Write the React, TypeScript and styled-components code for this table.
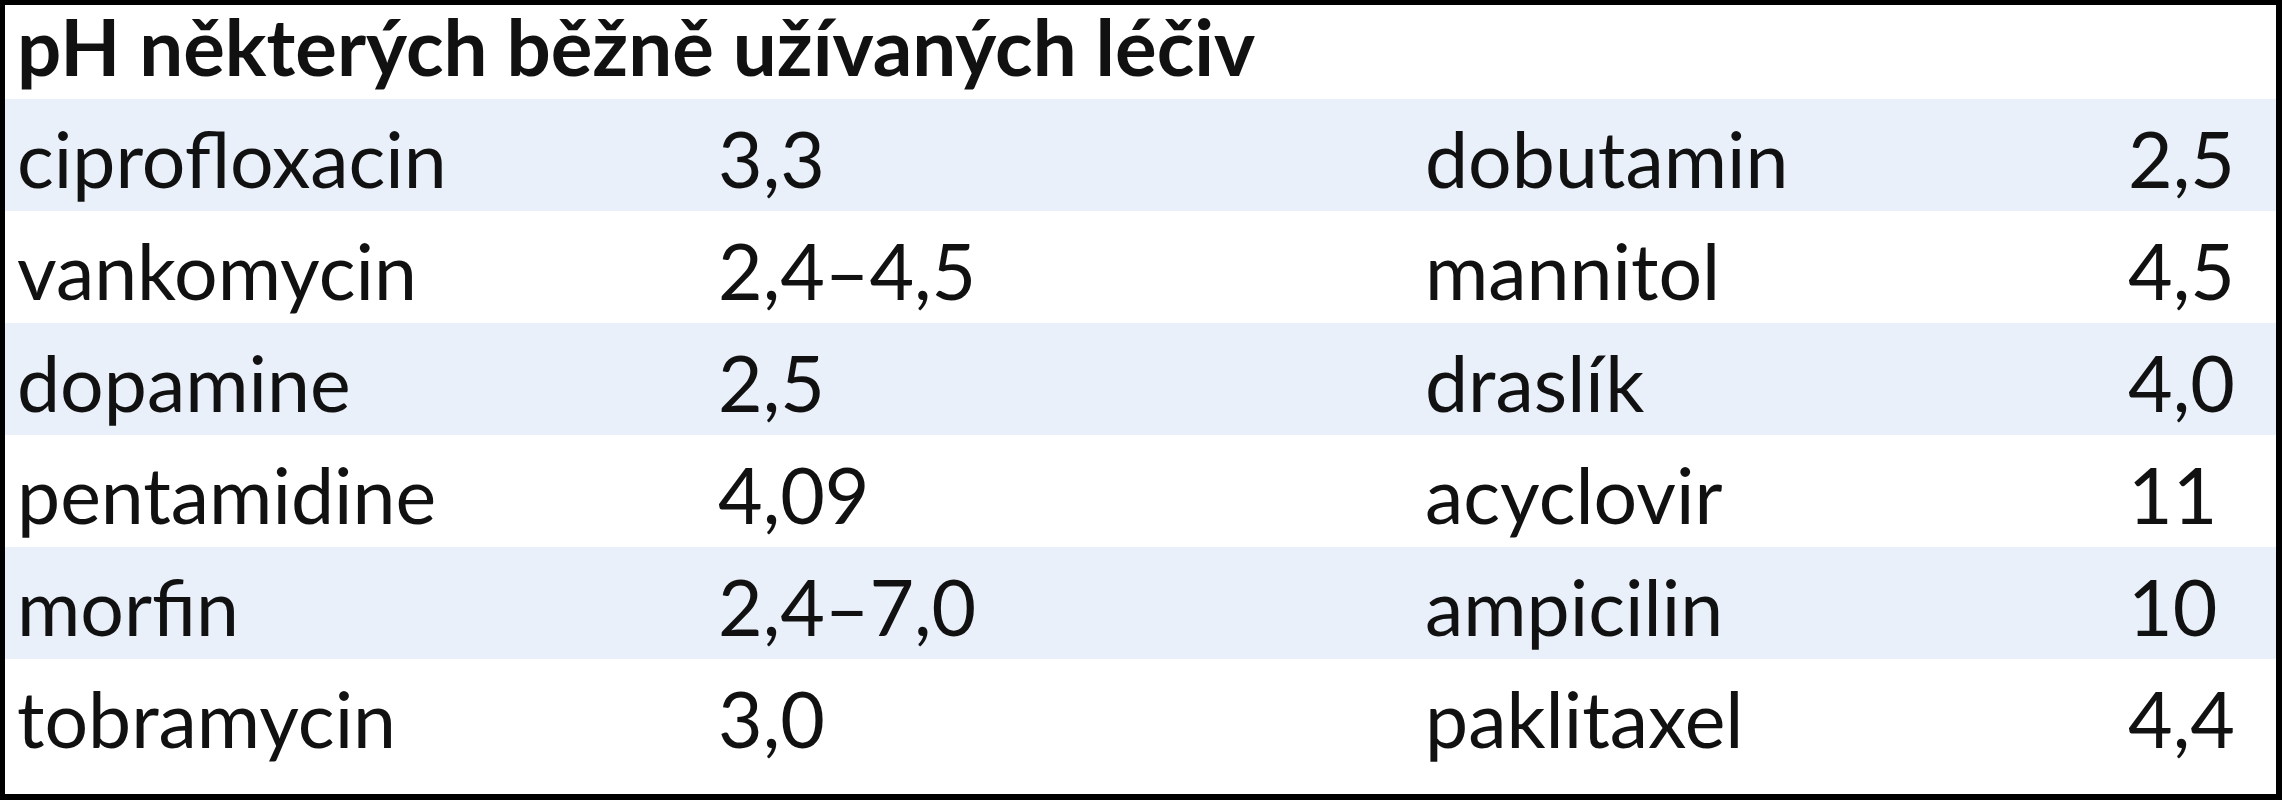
import React from 'react';
import styled, { createGlobalStyle } from 'styled-components';

const GlobalStyle = createGlobalStyle`
  html, body {
    margin: 0;
    padding: 0;
    background: #000;
  }
`;

const Frame = styled.div`
  box-sizing: border-box;
  width: 2282px;
  height: 800px;
  border-style: solid;
  border-color: #000;
  border-width: 5px 6px 6px 5px;
  background: #fff;
  font-family: Lato, 'Open Sans', sans-serif;
  font-size: 77px;
  line-height: 1;
  color: #111;
  display: flex;
  flex-direction: column;
`;

const Title = styled.div`
  box-sizing: border-box;
  height: 94px;
  padding: 2px 12px 0;
  font-size: 78px;
  font-weight: 700;
  white-space: nowrap;
`;

const Row = styled.div<{ $shaded: boolean; $last?: boolean }>`
  box-sizing: border-box;
  display: grid;
  grid-template-columns: 701px 707px 703px 1fr;
  padding: 21px 0 0 12px;
  height: ${(p) => (p.$last ? 'auto' : '112px')};
  flex: ${(p) => (p.$last ? '1' : 'none')};
  background: ${(p) => (p.$shaded ? '#e9f0fa' : '#fff')};
  white-space: nowrap;
`;

const Cell = styled.span``;

const rows: [string, string, string, string][] = [
  ['ciprofloxacin', '3,3', 'dobutamin', '2,5'],
  ['vankomycin', '2,4–4,5', 'mannitol', '4,5'],
  ['dopamine', '2,5', 'draslík', '4,0'],
  ['pentamidine', '4,09', 'acyclovir', '11'],
  ['morfin', '2,4–7,0', 'ampicilin', '10'],
  ['tobramycin', '3,0', 'paklitaxel', '4,4'],
];

const App: React.FC = () => {
  return (
    <>
      <GlobalStyle />
      <Frame>
        <Title>pH některých běžně užívaných léčiv</Title>
        {rows.map((r, i) => (
          <Row key={r[0]} $shaded={i % 2 === 0} $last={i === rows.length - 1}>
            {r.map((c) => (
              <Cell key={c}>{c}</Cell>
            ))}
          </Row>
        ))}
      </Frame>
    </>
  );
};

export default App;
